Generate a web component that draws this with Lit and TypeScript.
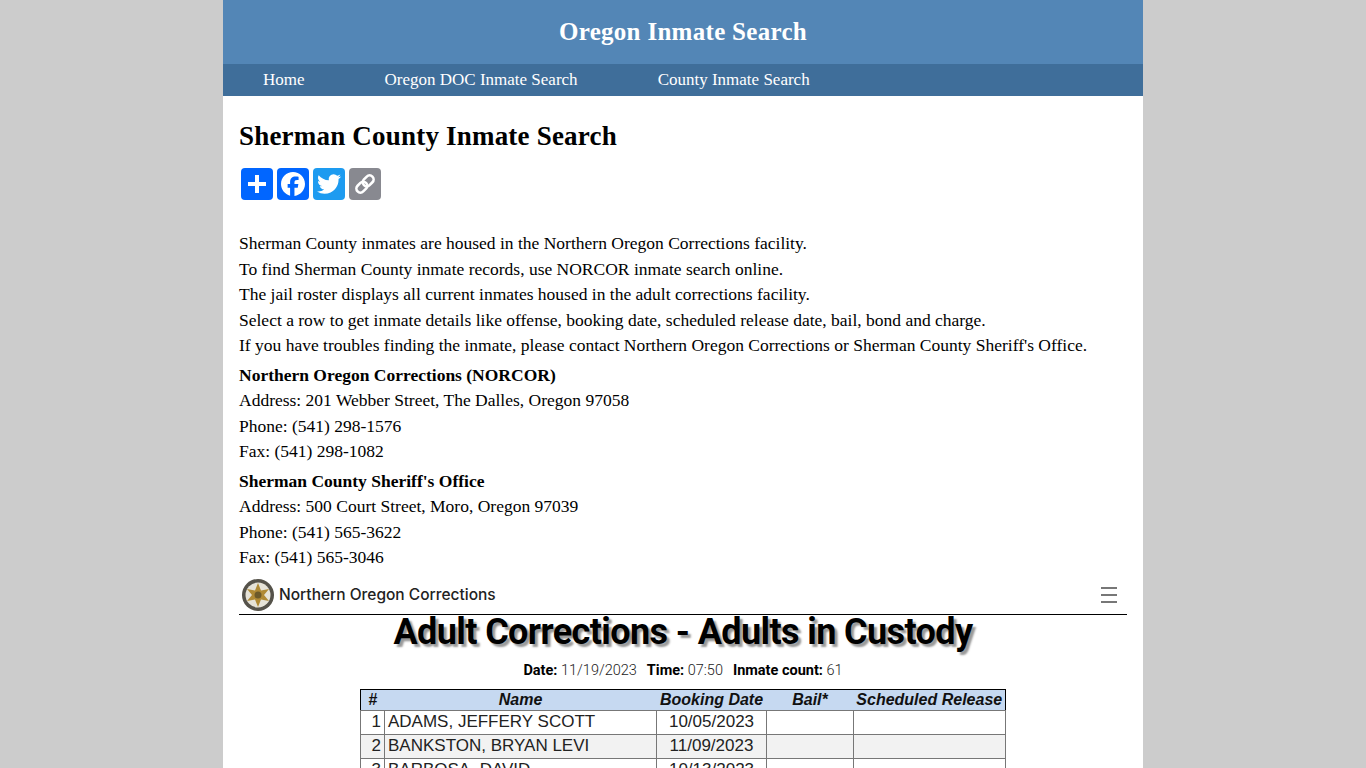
import {LitElement, html, css, svg} from 'lit';
import {customElement} from 'lit/decorators.js';

const rows = [
  ['1', 'ADAMS, JEFFERY SCOTT', '10/05/2023'],
  ['2', 'BANKSTON, BRYAN LEVI', '11/09/2023'],
  ['3', 'BARBOSA, DAVID', '10/13/2023'],
];

const plus = svg`<path fill="#fff" d="M14 7h4v18h-4z"/><path fill="#fff" d="M7 14h18v4H7z"/>`;
const facebook = svg`<path fill="#fff" d="M28 16c0-6.627-5.373-12-12-12S4 9.373 4 16c0 5.628 3.875 10.35 9.101 11.647v-7.98h-2.474V16H13.1v-1.58c0-4.085 1.849-5.978 5.859-5.978.76 0 2.072.15 2.608.298v3.325c-.283-.03-.775-.045-1.386-.045-1.967 0-2.728.745-2.728 2.683V16h3.92l-.673 3.667h-3.247v8.245C23.395 27.195 28 22.135 28 16"/>`;
const twitter = svg`<path fill="#fff" d="M28 8.557a10 10 0 0 1-2.828.775 4.93 4.93 0 0 0 2.166-2.725 9.7 9.7 0 0 1-3.13 1.194 4.92 4.92 0 0 0-3.593-1.55 4.924 4.924 0 0 0-4.794 6.049c-4.09-.21-7.72-2.17-10.15-5.15a4.94 4.94 0 0 0-.665 2.477c0 1.71.87 3.214 2.19 4.1a5 5 0 0 1-2.23-.616v.06c0 2.39 1.7 4.38 3.952 4.83-.414.115-.85.174-1.297.174q-.476-.001-.928-.086a4.935 4.935 0 0 0 4.6 3.42 9.9 9.9 0 0 1-6.114 2.107q-.597 0-1.175-.068a13.95 13.95 0 0 0 7.55 2.213c9.056 0 14.01-7.507 14.01-14.013q0-.32-.015-.637c.96-.695 1.795-1.56 2.455-2.55z"/>`;
const link = svg`<g fill="none" stroke="#fff" stroke-width="2.6" transform="rotate(-45 16 16)"><rect x="5.5" y="12" width="12" height="8" rx="4"/><rect x="14.5" y="12" width="12" height="8" rx="4"/></g>`;

@customElement('app-root')
class AppRoot extends LitElement {
  static styles = css`
    :host {
      display: block;
      height: 768px;
      overflow: hidden;
      background: #ccc;
    }
    .page {
      width: 920px;
      margin: 0 auto;
      background: #fff;
      color: #000;
      font-family: 'Liberation Serif', serif;
    }
    .site-title {
      height: 64px;
      background: #5386b6;
      color: #fff;
      font-size: 25px;
      font-weight: 700;
      letter-spacing: 0.3px;
      display: flex;
      align-items: center;
      justify-content: center;
    }
    .nav {
      height: 32px;
      background: #3f6e9a;
      color: #fff;
      font-size: 17px;
      display: flex;
      align-items: center;
      padding-left: 40px;
      gap: 80px;
    }
    .content {
      padding: 24px 16px 0;
      font-size: 17.5px;
      line-height: 25.5px;
    }
    h1 {
      margin: 0;
      font-size: 27px;
      line-height: 32px;
      font-weight: 700;
      letter-spacing: 0.2px;
    }
    .share {
      display: flex;
      gap: 4px;
      margin: 16px 0 0 2px;
    }
    .share svg {
      width: 32px;
      height: 32px;
      border-radius: 4px;
      display: block;
    }
    .intro {
      margin-top: 31px;
    }
    .block {
      margin-top: 4px;
    }
    .block b {
      display: block;
    }
    .embed {
      margin-top: 5px;
    }
    .embed-bar {
      height: 38px;
      border-bottom: 1px solid #000;
      display: flex;
      align-items: center;
      gap: 4px;
      padding: 0 10px 0 2px;
      font-family: Inter, sans-serif;
      font-size: 15.5px;
      font-weight: 500;
      color: #222;
    }
    .seal {
      width: 34px;
      height: 34px;
      flex: none;
    }
    .menu {
      margin-left: auto;
      width: 16px;
      height: 16px;
      display: flex;
      flex-direction: column;
      justify-content: space-between;
    }
    .menu i {
      display: block;
      height: 2px;
      background: #777;
    }
    .embed-title {
      margin: 0;
      text-align: center;
      font-family: Roboto, sans-serif;
      font-size: 36px;
      line-height: 34px;
      font-weight: 700;
      letter-spacing: -0.6px;
      text-shadow: 3px 3px 2px #999;
    }
    .stats {
      margin-top: 12px;
      display: flex;
      justify-content: center;
      gap: 10px;
      font-family: Roboto, sans-serif;
      font-size: 14.5px;
      line-height: 20px;
      font-weight: 300;
      color: #222;
    }
    .stats b {
      font-weight: 700;
      color: #000;
    }
    table {
      width: 646px;
      margin: 8px auto 0;
      border-collapse: collapse;
      table-layout: fixed;
      border: 1px solid #000;
      font-family: 'Liberation Sans', sans-serif;
      color: #222;
      line-height: 20px;
    }
    th {
      height: 19px;
      padding: 0;
      background: #c6d9f1;
      color: #111;
      font-size: 16px;
      font-weight: 700;
      font-style: italic;
      border-bottom: 1px solid #777;
    }
    td {
      height: 23px;
      padding: 0 3px;
      font-size: 17px;
      border: 1px solid #777;
    }
    tr:nth-child(even) td {
      background: #f2f2f2;
    }
    .num {
      text-align: right;
    }
    .date {
      text-align: center;
    }
  `;

  render() {
    return html`
      <div class="page">
        <div class="site-title">Oregon Inmate Search</div>
        <nav class="nav">
          <span>Home</span>
          <span>Oregon DOC Inmate Search</span>
          <span>County Inmate Search</span>
        </nav>
        <div class="content">
          <h1>Sherman County Inmate Search</h1>
          <div class="share">
            <svg viewBox="0 0 32 32" style="background:#0166ff">${plus}</svg>
            <svg viewBox="0 0 32 32" style="background:#0166ff">${facebook}</svg>
            <svg viewBox="0 0 32 32" style="background:#1d9bf0">${twitter}</svg>
            <svg viewBox="0 0 32 32" style="background:#888990">${link}</svg>
          </div>
          <div class="intro">
            Sherman County inmates are housed in the Northern Oregon Corrections facility.<br />
            To find Sherman County inmate records, use NORCOR inmate search online.<br />
            The jail roster displays all current inmates housed in the adult corrections facility.<br />
            Select a row to get inmate details like offense, booking date, scheduled release date, bail, bond and charge.<br />
            If you have troubles finding the inmate, please contact Northern Oregon Corrections or Sherman County Sheriff's Office.
          </div>
          <div class="block">
            <b>Northern Oregon Corrections (NORCOR)</b>
            Address: 201 Webber Street, The Dalles, Oregon 97058<br />
            Phone: (541) 298-1576<br />
            Fax: (541) 298-1082
          </div>
          <div class="block">
            <b>Sherman County Sheriff's Office</b>
            Address: 500 Court Street, Moro, Oregon 97039<br />
            Phone: (541) 565-3622<br />
            Fax: (541) 565-3046
          </div>
          <div class="embed">
            <div class="embed-bar">
              <svg class="seal" viewBox="0 0 34 34">
                <circle cx="17" cy="17" r="16" fill="#55524a" />
                <circle cx="17" cy="17" r="12.5" fill="#e6e3d8" />
                <path fill="#b08a35" d="M17 5l3 7.5 8-1.5-5 6 5 6-8-1.5-3 7.5-3-7.5-8 1.5 5-6-5-6 8 1.5z" />
                <circle cx="17" cy="17" r="3.5" fill="#6d5a2a" />
              </svg>
              <span>Northern Oregon Corrections</span>
              <div class="menu"><i></i><i></i><i></i></div>
            </div>
            <h2 class="embed-title">Adult Corrections - Adults in Custody</h2>
            <div class="stats">
              <span><b>Date:</b> 11/19/2023</span>
              <span><b>Time:</b> 07:50</span>
              <span><b>Inmate count:</b> 61</span>
            </div>
            <table>
              <colgroup>
                <col style="width:24px" /><col style="width:272px" /><col style="width:110px" /><col style="width:87px" /><col />
              </colgroup>
              <thead>
                <tr><th>#</th><th>Name</th><th>Booking Date</th><th>Bail*</th><th>Scheduled Release</th></tr>
              </thead>
              <tbody>
                ${rows.map(
                  (r) => html`<tr>
                    <td class="num">${r[0]}</td>
                    <td>${r[1]}</td>
                    <td class="date">${r[2]}</td>
                    <td></td>
                    <td></td>
                  </tr>`,
                )}
              </tbody>
            </table>
          </div>
        </div>
      </div>
    `;
  }
}
